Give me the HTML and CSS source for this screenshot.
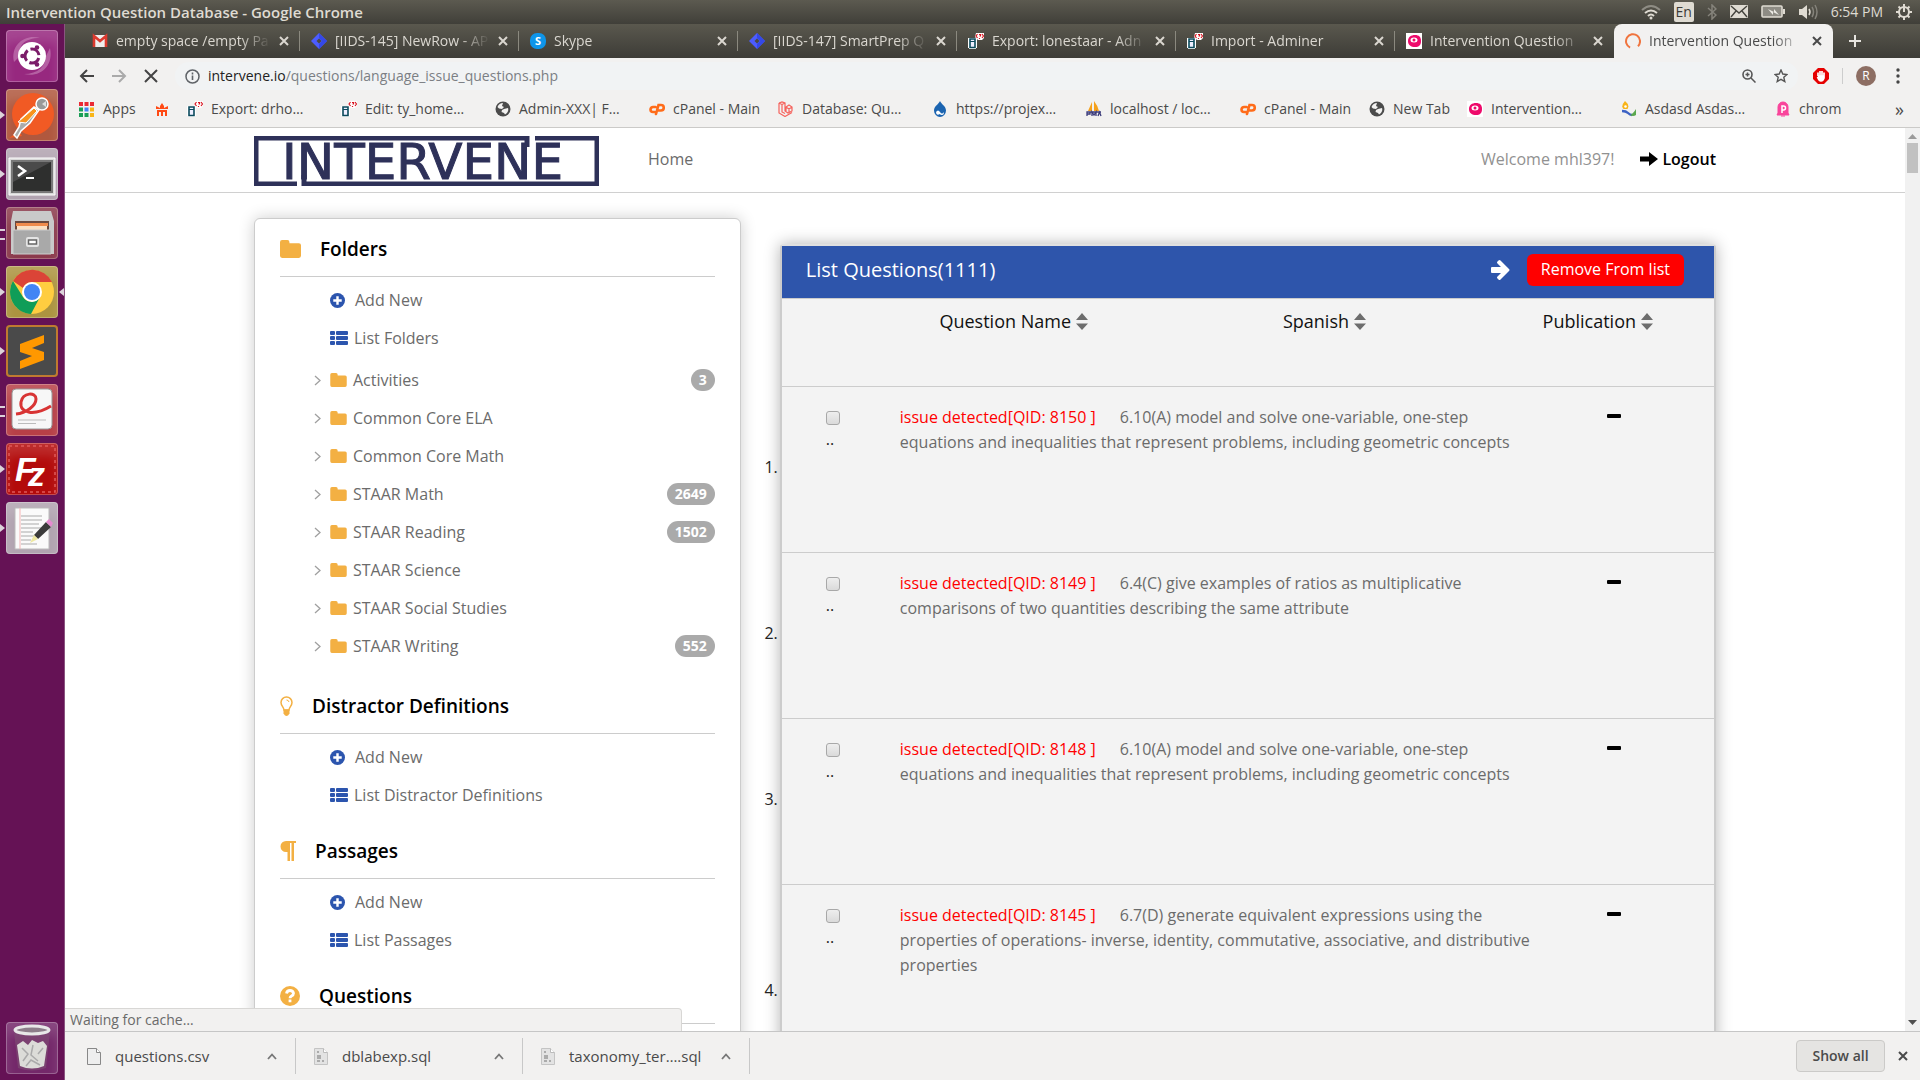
FILE: index.html
```html
<!DOCTYPE html>
<html lang="en">
<head>
<meta charset="utf-8">
<title>Intervention Question Database</title>
<link rel="stylesheet" href="styles.css">
</head>
<body>
<svg class="sprite" aria-hidden="true">
  <symbol id="close" viewBox="0 0 10 10"><path d="M1 1l8 8M9 1l-8 8" fill="none" stroke="currentColor" stroke-width="2"/></symbol>
  <symbol id="jira" viewBox="0 0 16 16"><path d="M8 0l8 8-8 8-8-8z" fill="#4c5cff"/><path d="M8 0v5l3 3-3 3v5l8-8z" fill="#3448e8"/><path d="M8 5.500l2.500 2.500L8 10.500 5.500 8z" fill="#4a4943"/></symbol>
  <symbol id="adminer" viewBox="0 0 16 16"><path d="M0 5h9v10H8v1H1v-1H0z" fill="#fff"/><path d="M2 6h5v8.500H2z" fill="#eef" stroke="#0b4a5c" stroke-width="1.600"/><path d="M2 8.500h5" stroke="#0b4a5c"/><path d="M8 0h8v5l-2 2h-4L7 4z" fill="#fff"/><path d="M9.500 1L8 3l1.500 2M14 1l1.500 2L14 5M11 1.500h1.500v1.500h-1M11.500 5v1" fill="none" stroke="#d8131f" stroke-width="1.200"/></symbol>
  <symbol id="pink" viewBox="0 0 16 16"><path d="M0 0h16v16H0z" fill="#fff"/><path d="M2 8c0-4 3-6 7-6 4 0 6 2 6 6s-2 6-6 6-7-2-7-6z" fill="#ee0a6b"/><ellipse cx="8" cy="7" rx="3.500" ry="2.500" fill="#fff"/><circle cx="8" cy="7" r="1.500" fill="#ee0a6b"/></symbol>
  <symbol id="globe" viewBox="0 0 16 16"><circle cx="8" cy="8" r="7.500" fill="#4b4b4b"/><path d="M2.500 6c1-2.500 3-4 5.500-4L7 5l2 1-2 2-3-.5zM9 8l4-1c1 3-1 5.500-3 6.500L9 12 6.500 11l.5-2z" fill="#f2f1f0"/></symbol>
  <symbol id="cp" viewBox="0 0 16 16"><path d="M6.500 6H4a2.500 2.500 0 0 0 0 5h1.500M7 13l2.500-9H12a2.500 2.500 0 0 1 0 5.500H9.500" fill="none" stroke="#ff6c1a" stroke-width="2.600" stroke-linecap="round"/></symbol>
  <symbol id="folder" viewBox="0 0 20 17"><path d="M0 2a2 2 0 0 1 2-2h5a2 2 0 0 1 2 2v1h9a2 2 0 0 1 2 2v10a2 2 0 0 1-2 2H2a2 2 0 0 1-2-2z" fill="#f3b043"/></symbol>
  <symbol id="plus" viewBox="0 0 16 16"><circle cx="8" cy="8" r="8" fill="#2c55ae"/><path d="M8 3.500v9M3.500 8h9" stroke="#fff" stroke-width="2.600"/></symbol>
  <symbol id="list" viewBox="0 0 18 14"><path d="M0 1q0-1 1-1h3q1 0 1 1v2q0 1-1 1H1Q0 4 0 3zM0 6q0-1 1-1h3q1 0 1 1v2q0 1-1 1H1Q0 9 0 8zM0 11q0-1 1-1h3q1 0 1 1v2q0 1-1 1H1q-1 0-1-1zM6 1q0-1 1-1h10q1 0 1 1v2q0 1-1 1H7Q6 4 6 3zM6 6q0-1 1-1h10q1 0 1 1v2q0 1-1 1H7Q6 9 6 8zM6 11q0-1 1-1h10q1 0 1 1v2q0 1-1 1H7q-1 0-1-1z" fill="#2c55ae"/></symbol>
  <symbol id="chev" viewBox="0 0 7 11"><path d="M1 1l5 4.500-5 4.500" fill="none" stroke="#a0a0a0" stroke-width="1.300"/></symbol>
  <symbol id="sort" viewBox="0 0 12 17"><path d="M6 0l6 7H0zM6 17L0 10.500h12z" fill="#6d6d6d"/></symbol>
  <symbol id="up" viewBox="0 0 10 7"><path d="M1 6l4-4.500L9 6" fill="none" stroke="#777" stroke-width="1.800"/></symbol>
  <symbol id="binfile" viewBox="0 0 14 17"><path d="M.5.500h9l4 4v12H.5z" fill="#e3e3e3" stroke="#c4c4c4"/><path d="M9.500.500v4h4" fill="#fff" stroke="#bbb"/><path d="M3 4h2M3 8h4M3 10h4M3 13h3M8 13h2" stroke="#999" stroke-width="1.500"/></symbol>
</svg>

<header class="panel">
  <span class="panel-title">Intervention Question Database - Google Chrome</span>
  <div class="indicators">
    <svg width="20" height="16" viewBox="0 0 20 16"><path d="M1 6q9-8 18 0" fill="none" stroke="#8e8c84" stroke-width="2"/><path d="M4 9q6-5 12 0M7 12q3-3 6 0" fill="none" stroke="#dfdbd2" stroke-width="2"/><circle cx="10" cy="14" r="1.500" fill="#dfdbd2"/></svg>
    <span class="lang">En</span>
    <svg width="10" height="16" viewBox="0 0 10 16"><path d="M1 4l8 7-4 4V1l4 4-8 7" fill="none" stroke="#85837b" stroke-width="1.500"/></svg>
    <svg width="18" height="14" viewBox="0 0 18 14"><rect width="18" height="13" rx="1" fill="#dfdbd2"/><path d="M1 1l8 7 8-7M1 12l5-6M17 12l-5-6" fill="none" stroke="#45443e" stroke-width="1.400"/></svg>
    <svg width="24" height="14" viewBox="0 0 24 14"><rect x="1" y="1" width="20" height="11" rx="1" fill="#8e8c84" stroke="#dfdbd2" stroke-width="1.600"/><path d="M22 4h2v5h-2z" fill="#dfdbd2"/><path d="M7 4l6 3V4l5 6-6-3v3z" fill="#eceae4"/></svg>
    <svg width="20" height="16" viewBox="0 0 20 16"><path d="M1 5h3l5-4v14l-5-4H1z" fill="#dfdbd2"/><path d="M11 5q2 3 0 6" fill="none" stroke="#dfdbd2" stroke-width="1.500"/><path d="M14 3q3 5 0 10M17 1q4 7 0 14" fill="none" stroke="#85837b" stroke-width="1.500"/></svg>
    <time class="clock">6:54 PM</time>
    <svg width="16" height="16" viewBox="0 0 16 16"><circle cx="8" cy="8" r="5" fill="none" stroke="#dfdbd2" stroke-width="2"/><path d="M8 0v8M0 8h3M13 8h3M2.500 2.500l2 2M13.500 2.500l-2 2M2.500 13.500l2-2M13.500 13.500l-2-2M8 13v3" stroke="#dfdbd2" stroke-width="2"/></svg>
  </div>
</header>

<div class="desktop">
  <nav class="launcher" aria-label="Launcher">
    <button class="tile dash" aria-label="Dash"><svg viewBox="0 0 52 52"><path d="M8 32C4 14 20 4 34 8c-16 0-22 8-20 18M44 18c4 18-10 30-26 26 14 0 22-8 22-18" fill="#c985bb" opacity=".6"/><circle cx="26" cy="26" r="14" fill="#fff"/><circle cx="26" cy="26" r="7" fill="none" stroke="#7b1c69" stroke-width="3" stroke-dasharray="11.600 3" stroke-dashoffset="-2"/><circle cx="16.500" cy="26" r="2.300" fill="#7b1c69"/><circle cx="31" cy="17.500" r="2.300" fill="#7b1c69"/><circle cx="31" cy="34.500" r="2.300" fill="#7b1c69"/></svg></button>
    <button class="tile postman run" aria-label="Postman"><svg viewBox="0 0 52 52"><circle cx="27" cy="25" r="21" fill="#f15a24"/><path d="M3 49l10-7 3 5z" fill="#f15a24"/><path d="M15 30l13-12 5 3-9 13-9 8-4 7-3-3 5-8z" fill="#aaa" stroke="#fff" stroke-width="1.500"/><path d="M12 33l16-14 3 3-11 12z" fill="#f7931e" stroke="#fff"/><circle cx="36" cy="15" r="6" fill="#999" stroke="#fff" stroke-width="1.500"/><path d="M36 15l4-3v6z" fill="#ddd"/></svg></button>
    <button class="tile grey run" aria-label="Terminal"><svg viewBox="0 0 52 52"><path d="M3 10h46v37H3z" fill="#d8d8d8" stroke="#fff"/><path d="M6 13h40v31H6z" fill="#2e2f2e" stroke="#777" stroke-width="2"/><path d="M7 14h38L7 34z" fill="#4a4a4a"/><path d="M12 18l7 5-7 5" fill="none" stroke="#fff" stroke-width="2.500"/><path d="M20 30h8" stroke="#fff" stroke-width="2"/></svg></button>
    <button class="tile files run run-two" aria-label="Files"><svg viewBox="0 0 52 52"><path d="M7 4h38l3 10v33H5V14z" fill="#c9c9c9"/><path d="M9 14h34v10H9z" fill="#6b4a3f"/><path d="M10 16h32v3H10z" fill="#f08b4c"/><path d="M11 19h30v4H11z" fill="#fbe0c4"/><path d="M7 23h38v24H7z" fill="#a9a9a9" stroke="#ccc"/><rect x="20" y="30" width="13" height="10" rx="2" fill="#e4e4e4"/><rect x="22.500" y="33" width="8" height="4" fill="#fff" stroke="#666" stroke-width="1.500"/></svg></button>
    <button class="tile chrome run focus" aria-label="Google Chrome"><svg viewBox="0 0 52 52"><circle cx="26" cy="26" r="22" fill="#ffcd40"/><path d="M7 15A22 22 0 0 1 46 16H26a10 10 0 0 0-9 6z" fill="#db4437"/><path d="M7 15A22 22 0 0 0 25 48l9-17a10 10 0 0 1-17 0z" fill="#0f9d58"/><circle cx="26" cy="26" r="10" fill="#fff"/><circle cx="26" cy="26" r="8" fill="#4285f4"/></svg></button>
    <button class="tile sublime run" aria-label="Sublime Text"><svg viewBox="0 0 52 52"><path d="M14 19l24-9v8l-12 5 12 4v8l-24 9v-8l12-5-12-4z" fill="#ff9800"/></svg></button>
    <button class="tile reader run run-two" aria-label="Document Viewer"><svg viewBox="0 0 52 52"><rect x="6" y="5" width="40" height="40" rx="4" fill="#f7f7f7" stroke="#999"/><path d="M10 30c10-1 20-8 20-15s-13-7-15 3c-2 12 14 14 30 4" fill="none" stroke="#d83434" stroke-width="3"/><path d="M12 36h28M12 39.500h18" stroke="#bbb"/></svg></button>
    <button class="tile filezilla run" aria-label="FileZilla"><svg viewBox="0 0 52 52"><rect x="3" y="3" width="46" height="46" fill="none" stroke="#e05a5a" stroke-width="1.500" stroke-dasharray="3 3"/><text x="9" y="38" class="fz-f">F</text><text x="22" y="43" class="fz-z">z</text></svg></button>
    <button class="tile grey run" aria-label="Text Editor"><svg viewBox="0 0 52 52"><path d="M9 6h34v41H9z" fill="#fafafa" stroke="#bbb"/><path d="M14 6v41" stroke="#f5b5b5"/><path d="M15 14h21M15 18h21M15 22h18M15 26h20M15 30h12M15 34h15M15 38h10M15 42h16" stroke="#aaa"/><path d="M28 33l12-13 5 5-13 12z" fill="#3b3b3b"/><path d="M40 20l3-3 4 4-2 4z" fill="#e68ad0"/><path d="M28 33l4 4-8 4z" fill="#eee8a0"/></svg></button>
    <button class="tile trash" aria-label="Trash"><svg viewBox="0 0 52 52"><path d="M8 10h36l-4 36q-14 5-28 0z" fill="#7d4a74" opacity=".7"/><path d="M11 23l6-4 5 4 4-5 6 3 5-2 4 5-3 20q-12 5-24 0z" fill="#dcdcd8"/><path d="M16 26l6 6-5 7M27 23l-2 10 7 6M37 26l-5 6M20 44l5-6 9 5" fill="none" stroke="#aaa" stroke-width="1.500"/><ellipse cx="26" cy="8" rx="17" ry="4" fill="#8d7d8a" stroke="#e8e8e8" stroke-width="3"/></svg></button>
  </nav>

  <div class="browser">
    <div class="tabstrip">
      <div class="tab"><svg class="fav" viewBox="0 0 16 16"><path d="M1 2h14v12H1z" fill="#eee"/><path d="M2 14V3l6 5 6-5v11" fill="none" stroke="#db3a2f" stroke-width="2.600"/></svg><span class="tab-text">empty space /empty Pa</span><button class="x" aria-label="Close tab"><svg><use href="#close"/></svg></button></div>
      <div class="tab"><svg class="fav"><use href="#jira"/></svg><span class="tab-text">[IIDS-145] NewRow - AP</span><button class="x" aria-label="Close tab"><svg><use href="#close"/></svg></button></div>
      <div class="tab"><svg class="fav" viewBox="0 0 16 16"><rect width="16" height="16" rx="7" fill="#0e95ea"/><text x="8" y="12" class="skype-s">S</text></svg><span class="tab-text">Skype</span><button class="x" aria-label="Close tab"><svg><use href="#close"/></svg></button></div>
      <div class="tab"><svg class="fav"><use href="#jira"/></svg><span class="tab-text">[IIDS-147] SmartPrep Q</span><button class="x" aria-label="Close tab"><svg><use href="#close"/></svg></button></div>
      <div class="tab"><svg class="fav"><use href="#adminer"/></svg><span class="tab-text">Export: lonestaar - Adn</span><button class="x" aria-label="Close tab"><svg><use href="#close"/></svg></button></div>
      <div class="tab"><svg class="fav"><use href="#adminer"/></svg><span class="tab-text">Import - Adminer</span><button class="x" aria-label="Close tab"><svg><use href="#close"/></svg></button></div>
      <div class="tab last"><svg class="fav"><use href="#pink"/></svg><span class="tab-text">Intervention Question</span><button class="x" aria-label="Close tab"><svg><use href="#close"/></svg></button></div>
      <div class="tab active"><svg class="fav" viewBox="0 0 16 16"><path d="M4 14A7 7 0 1 1 12 14" fill="none" stroke="#f0743e" stroke-width="2" transform="rotate(-10 8 8)"/></svg><span class="tab-text">Intervention Question</span><button class="x" aria-label="Close tab"><svg><use href="#close"/></svg></button></div>
      <button class="newtab" aria-label="New tab"><svg width="12" height="12" viewBox="0 0 12 12"><path d="M6 0v12M0 6h12" stroke="#e6e4df" stroke-width="2"/></svg></button>
    </div>

    <div class="toolbar">
      <button class="tool" aria-label="Back"><svg width="16" height="16" viewBox="0 0 16 16"><path d="M15 8H2M8 2L2 8l6 6" fill="none" stroke="#444" stroke-width="2"/></svg></button>
      <button class="tool" aria-label="Forward"><svg width="16" height="16" viewBox="0 0 16 16"><path d="M1 8h13M8 2l6 6-6 6" fill="none" stroke="#aaa" stroke-width="2"/></svg></button>
      <button class="tool" aria-label="Stop"><svg width="16" height="16" viewBox="0 0 16 16"><path d="M2 2l12 12M14 2L2 14" fill="none" stroke="#444" stroke-width="2"/></svg></button>
      <div class="omnibox">
        <svg width="15" height="15" viewBox="0 0 15 15"><circle cx="7.500" cy="7.500" r="6.500" fill="none" stroke="#5f6368" stroke-width="1.500"/><path d="M7.500 6.500V11M7.500 3.500v2" stroke="#5f6368" stroke-width="1.600"/></svg>
        <span class="url"><b>intervene.io</b>/questions/language_issue_questions.php</span>
        <svg width="14" height="14" viewBox="0 0 14 14"><circle cx="5.500" cy="5.500" r="4.500" fill="none" stroke="#555" stroke-width="1.600"/><path d="M9 9l4.500 4.500M5.500 3.500v4M3.500 5.500h4" stroke="#555" stroke-width="1.500"/></svg>
        <svg width="14" height="14" viewBox="0 0 14 14"><path d="M7 1l1.800 4 4.200.5-3.200 2.800 1 4.200L7 10.300 3.200 12.500l1-4.200L1 5.500 5.200 5z" fill="none" stroke="#555" stroke-width="1.400"/></svg>
      </div>
      <svg class="adblock" width="16" height="16" viewBox="0 0 16 16"><path d="M5 0h6l5 5v6l-5 5H5l-5-5V5z" fill="#e60000"/><path d="M5 8V4.500M7 8V3M9 8V3M11 8V4.500M5 8h6v2q-1 3-3 3T4.500 9" stroke="#fff" stroke-width="1.700" fill="#fff"/></svg>
      <span class="rule"></span>
      <span class="avatar">R</span>
      <button class="tool" aria-label="Menu"><svg width="4" height="16" viewBox="0 0 4 16"><circle cx="2" cy="2" r="1.700" fill="#444"/><circle cx="2" cy="8" r="1.700" fill="#444"/><circle cx="2" cy="14" r="1.700" fill="#444"/></svg></button>
    </div>

    <nav class="bookmarks" aria-label="Bookmarks">
      <a href="#" class="bm-s"><svg class="bi" viewBox="0 0 16 16"><path d="M0 1h4v4H0zM5.500 1h4v4h-4zM11 1h4v4h-4z" fill="#ea2a35"/><path d="M0 6.500h4v4H0zM0 12h4v4H0zM5.500 12h4v4h-4z" fill="#1b9e56"/><path d="M5.500 6.500h4v4h-4z" fill="#4285f4"/><path d="M11 6.500h4v4h-4zM11 12h4v4h-4z" fill="#f9b517"/></svg>Apps</a>
      <a href="#" class="bm-xs" aria-label="Manta"><svg class="bi" viewBox="0 0 16 16"><path d="M1 5l4 2V5l2-3 2 3v2l4-2v3H1zM2 9h10v6h-2v-4H8v4H6v-4H4v4H2z" fill="#ff4a14"/></svg></a>
      <a href="#" class="bm-l"><svg class="bi"><use href="#adminer"/></svg>Export: drho…</a>
      <a href="#" class="bm-l"><svg class="bi"><use href="#adminer"/></svg>Edit: ty_home…</a>
      <a href="#" class="bm-l"><svg class="bi"><use href="#globe"/></svg>Admin-XXX| F…</a>
      <a href="#" class="bm-m"><svg class="bi"><use href="#cp"/></svg>cPanel - Main</a>
      <a href="#" class="bm-l"><svg class="bi" viewBox="0 0 16 16"><path d="M1 2l3-1 3 1v8l3 2 4-2V6l-3-2-3 2v4M1 2v10l6 3.500 7-4M1 2l3 1.500V11l3 1.500M4 3.500L7 2M8 6l3 2 3-2M11 8v3" fill="none" stroke="#f5625c" stroke-width="1.200"/></svg>Database: Qu…</a>
      <a href="#" class="bm-l"><svg class="bi" viewBox="0 0 16 16"><path d="M8 0c1 3 6 5 6 9.500a6 6.500 0 0 1-12 0C2 5 7 3 8 0z" fill="#1b64b0"/><path d="M4 11q2-3 4 0t4 0q0 3-2 3t-2-1q-4 2-4-2z" fill="#fff"/></svg>https://projex…</a>
      <a href="#" class="bm-l"><svg class="bi" viewBox="0 0 16 16"><path d="M6 1v9H2zM8 0q4 5 5 10H8z" fill="#f5a11c"/><path d="M1 11h14M1 15v-4h3v2H1M6 15v-4l2 3 2-3v4M12 15l1.500-4 1.500 4" fill="none" stroke="#3b3b7a" stroke-width="1.300"/></svg>localhost / loc…</a>
      <a href="#" class="bm-m"><svg class="bi"><use href="#cp"/></svg>cPanel - Main</a>
      <a href="#" class="bm-n"><svg class="bi"><use href="#globe"/></svg>New Tab</a>
      <a href="#" class="bm-l"><svg class="bi"><use href="#pink"/></svg>Intervention…</a>
      <a href="#" class="bm-l"><svg class="bi" viewBox="0 0 16 16"><path d="M4 0q5 4 2.500 8h-4Q-.5 5 4 0z" fill="#f8b418"/><circle cx="4.500" cy="5.500" r="1.300" fill="#fff"/><path d="M1 10q4 0 6 2t4 2" fill="none" stroke="#3d62c4" stroke-width="2.400"/><path d="M9 14q3-1 6-6v6q-3 2-6 0z" fill="#5aa84d"/></svg>Asdasd Asdas…</a>
      <a href="#" class="bm-n"><svg class="bi" viewBox="0 0 16 16"><path d="M3 12V6a5 5 0 0 1 10 0v6l1 2H2zM6 15h4" fill="#f9459b" stroke="#f9459b"/><path d="M7 12V5h1.500a2 2 0 0 1 0 4H7" fill="none" stroke="#fff" stroke-width="1.500"/></svg>chrom</a>
      <button class="more" aria-label="More bookmarks">»</button>
    </nav>

    <div class="viewport">
      <div class="page">
        <header class="site-head">
          <div class="wrap head-row">
            <a href="#" class="logo" aria-label="Intervene home"><svg width="345" height="50" viewBox="0 0 345 50"><path d="M273 11V2H2v46h41M50 39v9h293V2h-62" fill="none" stroke="#2e3159" stroke-width="5"/><text x="28" y="43" class="logo-text">INTERVENE</text></svg></a>
            <a href="#" class="home">Home</a>
            <span class="welcome">Welcome mhl397!</span>
            <a href="#" class="logout"><svg width="18" height="14" viewBox="0 0 18 14"><path d="M0 4.500h9V0l9 7-9 7V9.500H0z"/></svg>Logout</a>
          </div>
        </header>
        <main class="wrap columns">
          <aside class="side">
            <h2><svg width="21" height="18"><use href="#folder"/></svg>Folders</h2>
            <ul class="links">
              <li><a href="#"><svg class="i-plus"><use href="#plus"/></svg>Add New</a></li>
              <li><a href="#"><svg class="i-list"><use href="#list"/></svg>List Folders</a></li>
            </ul>
            <ul class="tree">
              <li><svg class="i-chev"><use href="#chev"/></svg><svg class="i-fold"><use href="#folder"/></svg><a href="#">Activities</a><span class="badge">3</span></li>
              <li><svg class="i-chev"><use href="#chev"/></svg><svg class="i-fold"><use href="#folder"/></svg><a href="#">Common Core ELA</a></li>
              <li><svg class="i-chev"><use href="#chev"/></svg><svg class="i-fold"><use href="#folder"/></svg><a href="#">Common Core Math</a></li>
              <li><svg class="i-chev"><use href="#chev"/></svg><svg class="i-fold"><use href="#folder"/></svg><a href="#">STAAR Math</a><span class="badge">2649</span></li>
              <li><svg class="i-chev"><use href="#chev"/></svg><svg class="i-fold"><use href="#folder"/></svg><a href="#">STAAR Reading</a><span class="badge">1502</span></li>
              <li><svg class="i-chev"><use href="#chev"/></svg><svg class="i-fold"><use href="#folder"/></svg><a href="#">STAAR Science</a></li>
              <li><svg class="i-chev"><use href="#chev"/></svg><svg class="i-fold"><use href="#folder"/></svg><a href="#">STAAR Social Studies</a></li>
              <li><svg class="i-chev"><use href="#chev"/></svg><svg class="i-fold"><use href="#folder"/></svg><a href="#">STAAR Writing</a><span class="badge">552</span></li>
            </ul>
            <h2><svg width="13" height="20" viewBox="0 0 13 20"><path d="M4 14c0-3-3-4-3-7.500a5.500 5.500 0 0 1 11 0C12 10 9 11 9 14z" fill="none" stroke="#f3b043" stroke-width="1.500"/><path d="M3.500 13.500h6v4Q8 20 6.500 20T3.500 17.500z" fill="#f3b043"/><path d="M6.500 4q2 0 2.500 2" fill="none" stroke="#f3b043"/></svg>Distractor Definitions</h2>
            <ul class="links">
              <li><a href="#"><svg class="i-plus"><use href="#plus"/></svg>Add New</a></li>
              <li><a href="#"><svg class="i-list"><use href="#list"/></svg>List Distractor Definitions</a></li>
            </ul>
            <h2><svg width="16" height="20" viewBox="0 0 16 20"><path d="M6 0h10v2h-2v18h-2.500V2H10v18H7.500v-9H6A5.500 5.500 0 0 1 6 0z" fill="#f3b043"/></svg>Passages</h2>
            <ul class="links">
              <li><a href="#"><svg class="i-plus"><use href="#plus"/></svg>Add New</a></li>
              <li><a href="#"><svg class="i-list"><use href="#list"/></svg>List Passages</a></li>
            </ul>
            <h2><svg width="20" height="20" viewBox="0 0 20 20"><circle cx="10" cy="10" r="10" fill="#f3b043"/><path d="M6.500 7.500Q7 4.500 10 4.500t3.500 2.700Q13.500 9 11.500 10q-1.500.8-1.500 2.200M10 13.500v2.800" fill="none" stroke="#fff" stroke-width="2.800"/></svg>Questions</h2>
            <ul class="links">
              <li><a href="#"><svg class="i-plus"><use href="#plus"/></svg>Add New</a></li>
            </ul>
          </aside>

          <section class="card">
            <div class="card-head">
              <h1>List Questions(1111)</h1>
              <svg width="19" height="20" viewBox="0 0 19 20"><path d="M0 8q0-1 1-1h9L6.500 3.500q-1-1 0-2L7.500.500q1-1 2 0L18 9q1 1 0 2l-8.500 8.500q-1 1-2 0l-1-1q-1-1 0-2L10 13H1q-1 0-1-1z" fill="#fff"/></svg>
              <button class="remove">Remove From list</button>
            </div>
            <table class="grid">
              <colgroup><col class="c-num"><col class="c-check"><col class="c-name"><col class="c-span"><col></colgroup>
              <thead>
                <tr><td class="num"></td><td></td><th>Question Name <svg class="sort"><use href="#sort"/></svg></th><th class="th-span">Spanish <svg class="sort"><use href="#sort"/></svg></th><th class="th-pub">Publication <svg class="sort"><use href="#sort"/></svg></th></tr>
              </thead>
              <tbody>
                <tr><td class="num">1.</td><td class="check"><input type="checkbox" aria-label="Question 8150"><span>..</span></td><td class="name" colspan="2"><a href="#">issue detected[QID: 8150 ]</a>6.10(A) model and solve one-variable, one-step equations and inequalities that represent problems, including geometric concepts</td><td class="pub"><span class="dash-mark"></span></td></tr>
                <tr><td class="num">2.</td><td class="check"><input type="checkbox" aria-label="Question 8149"><span>..</span></td><td class="name" colspan="2"><a href="#">issue detected[QID: 8149 ]</a>6.4(C) give examples of ratios as multiplicative comparisons of two quantities describing the same attribute</td><td class="pub"><span class="dash-mark"></span></td></tr>
                <tr><td class="num">3.</td><td class="check"><input type="checkbox" aria-label="Question 8148"><span>..</span></td><td class="name" colspan="2"><a href="#">issue detected[QID: 8148 ]</a>6.10(A) model and solve one-variable, one-step equations and inequalities that represent problems, including geometric concepts</td><td class="pub"><span class="dash-mark"></span></td></tr>
                <tr class="tall"><td class="num">4.</td><td class="check"><input type="checkbox" aria-label="Question 8145"><span>..</span></td><td class="name" colspan="2"><a href="#">issue detected[QID: 8145 ]</a>6.7(D) generate equivalent expressions using the properties of operations- inverse, identity, commutative, associative, and distributive properties</td><td class="pub"><span class="dash-mark"></span></td></tr>
              </tbody>
            </table>
          </section>
        </main>
      </div>
      <div class="scroll">
        <svg width="9" height="5" viewBox="0 0 9 5"><path d="M4.500 0L9 5H0z" fill="#9b9b9b"/></svg>
        <span class="thumb"></span>
        <svg class="down" width="9" height="5" viewBox="0 0 9 5"><path d="M0 0h9L4.500 5z" fill="#505050"/></svg>
      </div>
      <div class="status">Waiting for cache…</div>
    </div>

    <footer class="downloads">
      <div class="dl"><svg width="14" height="17" viewBox="0 0 14 17"><path d="M.5.500h9l4 4v12H.5z" fill="#eee" stroke="#888"/><path d="M9.500.500v4h4" fill="#fff" stroke="#888"/></svg><span>questions.csv</span><svg width="10" height="7"><use href="#up"/></svg></div>
      <div class="dl"><svg width="14" height="17"><use href="#binfile"/></svg><span>dblabexp.sql</span><svg width="10" height="7"><use href="#up"/></svg></div>
      <div class="dl"><svg width="14" height="17"><use href="#binfile"/></svg><span>taxonomy_ter….sql</span><svg width="10" height="7"><use href="#up"/></svg></div>
      <button class="showall">Show all</button>
      <button class="x" aria-label="Close downloads bar"><svg><use href="#close"/></svg></button>
    </footer>
  </div>
</div>
</body>
</html>
```
FILE: styles.css
```css
* { box-sizing: border-box; }
body {
  margin: 0;
  height: 100vh;
  display: flex;
  flex-direction: column;
  overflow: hidden;
  font: 14px/20px "Open Sans", sans-serif;
  color: #4a4a4a;
}
svg { display: block; flex: none; }
.sprite { position: absolute; width: 0; height: 0; }
button { font: inherit; color: inherit; border: 0; padding: 0; background: none; }
a { color: inherit; text-decoration: none; }
ul { list-style: none; margin: 0; padding: 0; }
h1, h2 { margin: 0; }

/* desktop panel */
.panel {
  flex: none;
  height: 24px;
  padding: 0 8px 0 6px;
  display: flex;
  align-items: center;
  justify-content: space-between;
  background: linear-gradient(#5c5a50, #403f39);
  color: #dfdbd2;
}
.panel-title { font-size: 15px; font-weight: 600; }
.indicators { display: flex; align-items: center; gap: 13px; }
.lang { width: 20px; height: 20px; border-radius: 2px; background: #dfdbd2; color: #3c3b37; text-align: center; }

.desktop { flex: 1; min-height: 0; display: flex; }

/* launcher */
.launcher {
  flex: none;
  width: 65px;
  padding: 6px;
  display: flex;
  flex-direction: column;
  gap: 7px;
  background: #651255;
  border-right: 1px solid #8a5480;
}
.tile {
  position: relative;
  flex: none;
  width: 52px;
  height: 52px;
  border-radius: 4px;
  box-shadow: inset 0 0 0 1px rgba(255, 255, 255, .25), inset 0 12px 12px rgba(255, 255, 255, .15);
}
.tile svg { width: 52px; height: 52px; }
.dash { background: #97287f; }
.postman { background: #b0583e; }
.grey { background: #b1a3b0; }
.files { background: #8b3a4c; }
.chrome { background: #ac9440; }
.sublime { background: #4a4a4a; box-shadow: inset 0 0 0 2px #c07a30; }
.reader { background: #b73f47; }
.filezilla { background: #b30b0b; }
.trash { margin-top: auto; background: #74286a; }
.run::before {
  content: "";
  position: absolute;
  left: -6px;
  top: 22px;
  border: 4px solid transparent;
  border-left: 5px solid #dcd3da;
  border-right: 0;
}
.run-two::before { border: solid #dcd3da; border-width: 2px 0; width: 5px; height: 7px; }
.focus::after {
  content: "";
  position: absolute;
  right: -6px;
  top: 22px;
  border: 4px solid transparent;
  border-right: 5px solid #dcd3da;
  border-left: 0;
}
.fz-f, .fz-z { font: italic 700 34px "Liberation Sans", sans-serif; fill: #fff; }

/* browser */
.browser { flex: 1; min-width: 0; display: flex; flex-direction: column; background: #f2f1f0; }
.tabstrip {
  flex: none;
  height: 34px;
  padding-left: 16px;
  display: flex;
  background: linear-gradient(#5a584e, #3d3c37);
  color: #dad7d0;
}
.tab {
  flex: 0 1 219px;
  min-width: 0;
  padding: 0 11px;
  display: flex;
  align-items: center;
  gap: 8px;
  position: relative;
}
.tab:not(.active):not(.last)::after { content: ""; position: absolute; right: 0; top: 7px; height: 20px; border-right: 1px solid #8b897f; }
.fav { width: 16px; height: 16px; }
.tab-text {
  flex: 1;
  min-width: 0;
  white-space: nowrap;
  -webkit-mask-image: linear-gradient(90deg, #000 80%, transparent);
  mask-image: linear-gradient(90deg, #000 80%, transparent);
}
.x svg { width: 10px; height: 10px; }
.active { background: #f2f1f0; color: #4a4a4a; border-radius: 8px 8px 0 0; }
.skype-s { font: 700 11px "Open Sans", sans-serif; fill: #fff; text-anchor: middle; }
.newtab { margin-left: 16px; }

.toolbar {
  flex: none;
  height: 36px;
  padding: 0 20px 0 14px;
  display: flex;
  align-items: center;
  gap: 16px;
}
.omnibox {
  flex: 1;
  height: 28px;
  padding: 0 10px;
  display: flex;
  align-items: center;
  gap: 18px;
  border-radius: 14px;
  background: #f1f3f4;
}
.url { flex: 1; margin-left: -10px; color: #7b7f84; }
.url b { font-weight: 400; color: #222; }
.adblock { margin: 0 -3px 0 -1px; }
.rule { width: 1px; height: 16px; background: #cdcdcd; }
.avatar { width: 20px; height: 20px; margin-left: -3px; border-radius: 10px; background: #8d6e63; color: #fff; text-align: center; font-size: 12px; }
.toolbar .tool:last-child { margin-left: 4px; }

.bookmarks {
  flex: none;
  height: 34px;
  padding: 0 16px 4px 14px;
  display: flex;
  align-items: center;
  border-bottom: 1px solid #cbcac8;
}
.bookmarks a { flex: none; display: flex; align-items: center; gap: 8px; white-space: nowrap; }
.bi { width: 16px; height: 16px; }
.bm-xs { width: 32px; }
.bm-s { width: 76px; }
.bm-n { width: 98px; }
.bm-m { width: 129px; }
.bm-l { width: 154px; }
.more { margin-left: auto; font-size: 18px; }

/* viewport */
.viewport { flex: 1; min-height: 0; display: flex; position: relative; overflow: hidden; background: #fff; }
.page { flex: 1; min-width: 0; font-size: 16px; line-height: 25px; color: #6b6b6b; }
.scroll {
  flex: none;
  width: 15px;
  padding: 6px 0;
  display: flex;
  flex-direction: column;
  align-items: center;
  gap: 4px;
  background: #f1f1f1;
}
.thumb { width: 11px; height: 30px; background: #c1c1c1; }
.down { margin-top: auto; }
.status {
  position: absolute;
  left: 0;
  bottom: 0;
  width: 617px;
  height: 23px;
  padding: 1px 5px;
  background: #f2f1f0;
  border: 1px solid #d8d7d5;
  border-width: 1px 1px 0 0;
  border-radius: 0 4px 0 0;
  color: #6a6a6a;
}

.wrap { max-width: 1462px; margin: 0 auto; }
.site-head { border-bottom: 1px solid #d0d0d0; }
.head-row { height: 64px; padding-top: 8px; display: flex; align-items: flex-start; line-height: 46px; }
.logo-text { font: 50px "DejaVu Sans", sans-serif; fill: #2e3159; stroke: #2e3159; stroke-width: 1px; }
.home { margin-left: 49px; margin-right: auto; }
.welcome { color: #919191; }
.logout { margin-left: 26px; display: flex; align-items: center; gap: 4px; font-weight: 600; color: #000; }

.columns {
  padding-top: 25px;
  display: grid;
  grid-template-columns: 13fr 25fr;
  gap: 39px;
  align-items: start;
}
.side {
  padding: 0 25px;
  background: #fff;
  border: 1px solid #ccc;
  border-radius: 6px;
  box-shadow: 0 0 16px rgba(0, 0, 0, .2);
}
.side h2 {
  height: 58px;
  padding: 3px 0 0;
  display: flex;
  align-items: center;
  gap: 19px;
  border-bottom: 1px solid #ccc;
  font-size: 19px;
  font-weight: 600;
  color: #000;
}
.links { padding: 4px 0 7px 50px; line-height: 38px; }
.links a { display: flex; align-items: center; }
.i-plus { width: 15px; height: 15px; margin-right: 10px; }
.i-list { width: 18px; height: 14px; margin-right: 6px; }
.links:has(+ .tree) { padding-bottom: 4px; }
.tree { padding: 0 0 11px 34px; line-height: 38px; }
.tree li { display: flex; align-items: center; }
.i-chev { width: 7px; height: 11px; margin-right: 9px; }
.i-fold { width: 17px; height: 14px; margin-right: 6px; }
.badge {
  margin-left: auto;
  padding: 0 8px;
  border-radius: 11px;
  background: #aaa;
  color: #fff;
  font-size: 14px;
  font-weight: 700;
  line-height: 22px;
}

.card {
  margin-top: 26px;
  border: 2px solid #ccc;
  border-top-color: #e0e0e0;
  border-radius: 4px;
  background: #f3f3f3;
  box-shadow: 0 0 16px rgba(0, 0, 0, .3);
}
.card-head {
  height: 53px;
  padding: 0 30px 5px 24px;
  display: flex;
  align-items: center;
  border-bottom: 1px solid #ccc;
  background: #2e55ab;
  color: #fff;
}
.card-head h1 { margin-right: auto; font-size: 20px; font-weight: 400; }
.remove { height: 32px; margin-left: 17px; padding: 0 14px; border-radius: 6px; background: #f00; }

.grid { width: calc(100% + 20px); margin-left: -20px; border-collapse: separate; border-spacing: 0; table-layout: fixed; }
.c-num { width: 20px; }
.c-check { width: 108px; }
.c-name { width: 26%; }
.c-span { width: 42%; }
.grid td, .grid th { padding: 18px 0 0; vertical-align: top; border-bottom: 1px solid #ccc; }
.grid thead tr { height: 88px; }
.grid th { padding-top: 10px; font-size: 18px; font-weight: 400; color: #111; }
.grid .th-span { padding-right: 26px; }
.grid .th-pub { padding-right: 56px; }
.sort { display: inline-block; width: 12px; height: 17px; vertical-align: -2px; }
.grid tbody tr { height: 166px; }
.grid tbody .tall { height: 191px; }
.grid .num { padding: 0 4px 73px 0; vertical-align: bottom; text-align: right; border: 0; color: #222; white-space: nowrap; }
.grid thead .num { padding: 0; }
.grid .check { padding-left: 44px; color: #222; }
.check span { display: block; line-height: 20px; }
.check input {
  appearance: none;
  display: block;
  width: 14px;
  height: 14px;
  margin: 6px 0 4px;
  border: 1px solid #a8a8a8;
  border-radius: 3px;
  background: linear-gradient(#eee, #dadada);
}
.grid .name { padding-left: 10px; }
.name a { margin-right: 24px; color: #f00; }
.grid .pub { padding-right: 24px; }
.dash-mark { display: block; width: 14px; height: 4px; margin: 9px auto 0; background: #000; border-radius: 1px; }

/* downloads */
.downloads {
  flex: none;
  height: 49px;
  padding: 0 12px 0 4px;
  display: flex;
  align-items: center;
  border-top: 1px solid #c6c6c6;
}
.dl { width: 227px; height: 36px; padding: 0 18px; display: flex; align-items: center; gap: 14px; border-right: 1px solid #c8c8c8; }
.dl span { flex: 1; font-size: 15px; white-space: nowrap; }
.showall {
  width: 89px;
  height: 32px;
  margin: 0 13px 0 auto;
  border: 1px solid #cbcac8;
  border-radius: 4px;
  background: #e5e4e2;
  font-weight: 600;
}
```
